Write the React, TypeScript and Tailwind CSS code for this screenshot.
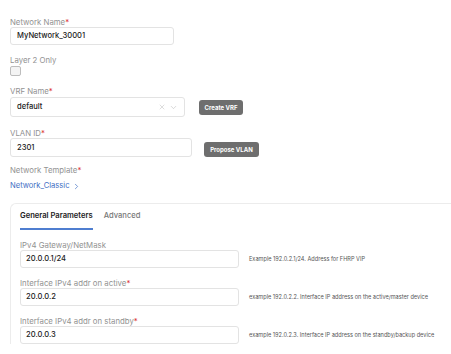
import { ChevronDown, ChevronRight, X } from 'lucide-react';

function Label({ text, required }: { text: string; required?: boolean }) {
  return (
    <div className="h-[10px] text-[7.8px] leading-[10px] text-[#929292]">
      {text}
      {required && <span className="text-[#d33]">*</span>}
    </div>
  );
}

function TextBox({ value, width }: { value: string; width: string }) {
  return (
    <div
      className={`${width} flex items-center rounded-[3px] border border-[#e3e3e3] bg-white text-[7.6px] font-medium text-[#222]`}
    >
      {value}
    </div>
  );
}

function ParamRow({ label, value, help, required }: { label: string; value: string; help: string; required?: boolean }) {
  return (
    <div>
      <Label text={label} required={required} />
      <div className="flex items-center gap-[10px]">
        <TextBox value={value} width="w-[219px] h-[18px] pl-[5px]" />
        <span className="text-[5.6px] text-[#555]">{help}</span>
      </div>
    </div>
  );
}

export default function App() {
  return (
    <div className="h-[354px] w-[451px] overflow-hidden bg-white pl-[10px] pt-[17px] font-['Inter',sans-serif]">
      <Label text="Network Name" required />
      <TextBox value="MyNetwork_30001" width="w-[164px] h-[18px] pl-[6px]" />

      <div className="mt-[10px]">
        <Label text="Layer 2 Only" />
        <div className="mt-[1px] h-[10px] w-[11px] rounded-[2px] border border-[#bdbdbd] bg-[#f4f4f4]" />
      </div>

      <div className="mt-[10px]">
        <Label text="VRF Name" required />
        <div className="mt-[1px] flex items-center gap-[14px]">
          <div className="flex h-[20px] w-[175px] items-center rounded-[3px] border border-[#e3e3e3] pl-[6px] pr-[6px] text-[7.6px] font-medium text-[#222]">
            <span className="flex-1">default</span>
            <X size={8} strokeWidth={1.5} className="text-[#bbb]" />
            <ChevronDown size={9} strokeWidth={1.5} className="ml-[3px] text-[#bbb]" />
          </div>
          <button className="h-[15px] w-[44px] rounded-[3px] bg-[#6e6e6e] text-[6px] font-bold leading-[15px] text-white">
            Create VRF
          </button>
        </div>
      </div>

      <div className="mt-[11px]">
        <Label text="VLAN ID" required />
        <div className="flex items-center gap-[12px]">
          <TextBox value="2301" width="w-[182px] h-[19px] pl-[6px]" />
          <button className="mt-[3px] h-[15px] w-[55px] rounded-[3px] bg-[#6e6e6e] text-[6px] font-bold leading-[15px] text-white">
            Propose VLAN
          </button>
        </div>
      </div>

      <div className="mt-[8px]">
        <Label text="Network Template" required />
        <div className="mt-[6px] flex items-center gap-[2px] text-[7.6px] leading-[10px] text-[#3f6fc4]">
          Network_Classic
          <ChevronRight size={9} strokeWidth={1.8} />
        </div>
      </div>

      <div className="mt-[12px] rounded-tl-[6px] border-l border-t border-[#ececec] pl-[9px] pt-[7px]">
        <div className="flex gap-[11px] text-[7.6px] leading-[10px]">
          <div className="border-b-2 border-[#4f7ed0] pb-[7px] font-semibold text-[#222]">General Parameters</div>
          <div className="font-medium text-[#777]">Advanced</div>
        </div>
        <div className="mt-[10px] flex flex-col gap-[10px]">
          <ParamRow label="IPv4 Gateway/NetMask" value="20.0.0.1/24" help="Example 192.0.2.1/24. Address for FHRP VIP" />
          <ParamRow
            label="Interface IPv4 addr on active"
            required
            value="20.0.0.2"
            help="example 192.0.2.2. Interface IP address on the active/master device"
          />
          <ParamRow
            label="Interface IPv4 addr on standby"
            required
            value="20.0.0.3"
            help="example 192.0.2.3. Interface IP address on the standby/backup device"
          />
        </div>
      </div>
    </div>
  );
}
